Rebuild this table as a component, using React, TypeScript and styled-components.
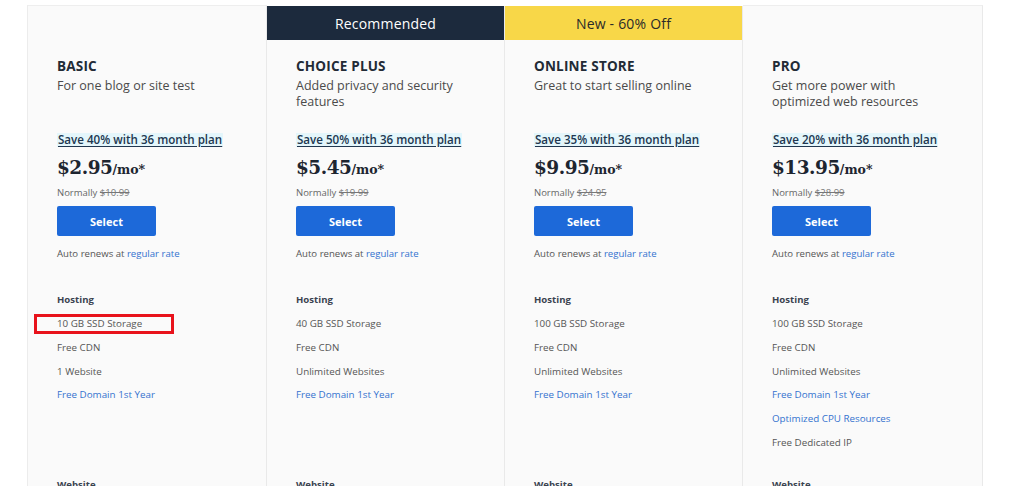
import React from "react";
import styled, { createGlobalStyle } from "styled-components";

const Global = createGlobalStyle`
  html, body { margin: 0; padding: 0; background: #ffffff; }
  body { font-family: "Open Sans", "Liberation Sans", sans-serif; color: #333; overflow: hidden; }
  *, *::before, *::after { box-sizing: border-box; }
`;

const Page = styled.div`
  width: 1024px;
  height: 486px;
  padding: 5px 0 0 27px;
  overflow: hidden;
`;

const Grid = styled.div`
  width: 955px;
  display: grid;
  grid-template-columns: 239px 238px 238px 240px;
  border-left: 1px solid #ececec;
`;

const Column = styled.div<{ $top?: boolean }>`
  display: flex;
  flex-direction: column;
  background: #fafafa;
  border-right: 1px solid #e9e9e9;
  border-top: ${(p) => (p.$top ? "1px solid #eeeeee" : "none")};
  margin-top: ${(p) => (p.$top ? "0" : "1px")};
  min-height: 500px;
`;

const Banner = styled.div<{ $variant?: "dark" | "yellow" | "none" }>`
  height: 34px;
  display: flex;
  align-items: center;
  justify-content: center;
  font-size: 14px;
  letter-spacing: 0.2px;
  background: ${(p) =>
    p.$variant === "dark" ? "#1c2a3d" : p.$variant === "yellow" ? "#f8d748" : "transparent"};
  color: ${(p) => (p.$variant === "dark" ? "#ffffff" : "#2a2a2a")};
`;

const Body = styled.div`
  padding: 18px 20px 0 29px;
  display: flex;
  flex-direction: column;
  align-items: flex-start;
`;

const Title = styled.div`
  font-weight: 700;
  font-size: 13.5px;
  line-height: 16px;
  color: #222b36;
  letter-spacing: 0.2px;
`;

const Desc = styled.div`
  margin-top: 4px;
  font-size: 12.5px;
  line-height: 16px;
  color: #4a4a4a;
  height: 32px;
  max-width: 165px;
`;

const Save = styled.span`
  margin-top: 23px;
  font-size: 11.6px;
  line-height: 14px;
  font-weight: 600;
  color: #213750;
  background: #e4f6fb;
  text-decoration: underline;
  text-underline-offset: 2px;
  padding: 0 1px;
`;

const PriceRow = styled.div`
  margin-top: 10px;
  display: flex;
  align-items: baseline;
  font-family: "DejaVu Serif", "Liberation Serif", serif;
  font-weight: 700;
  color: #1d2530;
`;

const Amount = styled.span`
  font-size: 18.5px;
  letter-spacing: -0.5px;
`;

const Per = styled.span`
  font-size: 12.5px;
`;

const Normally = styled.div`
  margin-top: 9px;
  font-size: 9.5px;
  line-height: 12px;
  color: #666;
  s { color: #777; }
`;

const SelectButton = styled.button`
  margin-top: 7px;
  width: 99px;
  height: 30px;
  border: none;
  border-radius: 2px;
  background: #1d69d9;
  color: #fff;
  font-family: inherit;
  font-weight: 700;
  font-size: 11px;
`;

const Renew = styled.div`
  margin-top: 12px;
  font-size: 9.6px;
  line-height: 12px;
  color: #555;
`;

const Link = styled.span`
  color: #3472cf;
`;

const SectionTitle = styled.div`
  margin-top: 34px;
  font-size: 9.6px;
  font-weight: 700;
  color: #3b4350;
  line-height: 12px;
`;

const FeatureList = styled.ul`
  list-style: none;
  margin: 12px 0 0;
  padding: 0;
  display: flex;
  flex-direction: column;
  gap: 11.8px;
  height: 161px;
`;

const Feature = styled.li<{ $link?: boolean; $marked?: boolean }>`
  position: relative;
  font-size: 9.8px;
  line-height: 12px;
  color: ${(p) => (p.$link ? "#3472cf" : "#555")};
  ${(p) =>
    p.$marked
      ? `&::after {
      content: "";
      position: absolute;
      left: -23px;
      top: -4px;
      width: 140px;
      height: 20px;
      border: 3px solid #e8121b;
    }`
      : ""}
`;

const NextSection = styled(SectionTitle)`
  margin-top: 0;
`;

type Plan = {
  name: string;
  desc: string;
  banner?: { text: string; variant: "dark" | "yellow" };
  save: string;
  price: string;
  normal: string;
  features: { text: string; link?: boolean; marked?: boolean }[];
};

const plans: Plan[] = [
  {
    name: "BASIC",
    desc: "For one blog or site test",
    save: "Save 40% with 36 month plan",
    price: "$2.95",
    normal: "$10.99",
    features: [
      { text: "10 GB SSD Storage", marked: true },
      { text: "Free CDN" },
      { text: "1 Website" },
      { text: "Free Domain 1st Year", link: true },
    ],
  },
  {
    name: "CHOICE PLUS",
    desc: "Added privacy and security features",
    banner: { text: "Recommended", variant: "dark" },
    save: "Save 50% with 36 month plan",
    price: "$5.45",
    normal: "$19.99",
    features: [
      { text: "40 GB SSD Storage" },
      { text: "Free CDN" },
      { text: "Unlimited Websites" },
      { text: "Free Domain 1st Year", link: true },
    ],
  },
  {
    name: "ONLINE STORE",
    desc: "Great to start selling online",
    banner: { text: "New - 60% Off", variant: "yellow" },
    save: "Save 35% with 36 month plan",
    price: "$9.95",
    normal: "$24.95",
    features: [
      { text: "100 GB SSD Storage" },
      { text: "Free CDN" },
      { text: "Unlimited Websites" },
      { text: "Free Domain 1st Year", link: true },
    ],
  },
  {
    name: "PRO",
    desc: "Get more power with optimized web resources",
    save: "Save 20% with 36 month plan",
    price: "$13.95",
    normal: "$28.99",
    features: [
      { text: "100 GB SSD Storage" },
      { text: "Free CDN" },
      { text: "Unlimited Websites" },
      { text: "Free Domain 1st Year", link: true },
      { text: "Optimized CPU Resources", link: true },
      { text: "Free Dedicated IP" },
    ],
  },
];

export default function App() {
  return (
    <>
      <Global />
      <Page>
        <Grid>
          {plans.map((p) => (
            <Column key={p.name} $top={!p.banner}>
              <Banner $variant={p.banner ? p.banner.variant : "none"}>{p.banner?.text}</Banner>
              <Body>
                <Title>{p.name}</Title>
                <Desc>{p.desc}</Desc>
                <Save>{p.save}</Save>
                <PriceRow>
                  <Amount>{p.price}</Amount>
                  <Per>/mo*</Per>
                </PriceRow>
                <Normally>
                  Normally <s>{p.normal}</s>
                </Normally>
                <SelectButton>Select</SelectButton>
                <Renew>
                  Auto renews at <Link>regular rate</Link>
                </Renew>
                <SectionTitle>Hosting</SectionTitle>
                <FeatureList>
                  {p.features.map((f) => (
                    <Feature key={f.text} $link={f.link} $marked={f.marked}>
                      {f.text}
                    </Feature>
                  ))}
                </FeatureList>
                <NextSection>Website</NextSection>
              </Body>
            </Column>
          ))}
        </Grid>
      </Page>
    </>
  );
}
